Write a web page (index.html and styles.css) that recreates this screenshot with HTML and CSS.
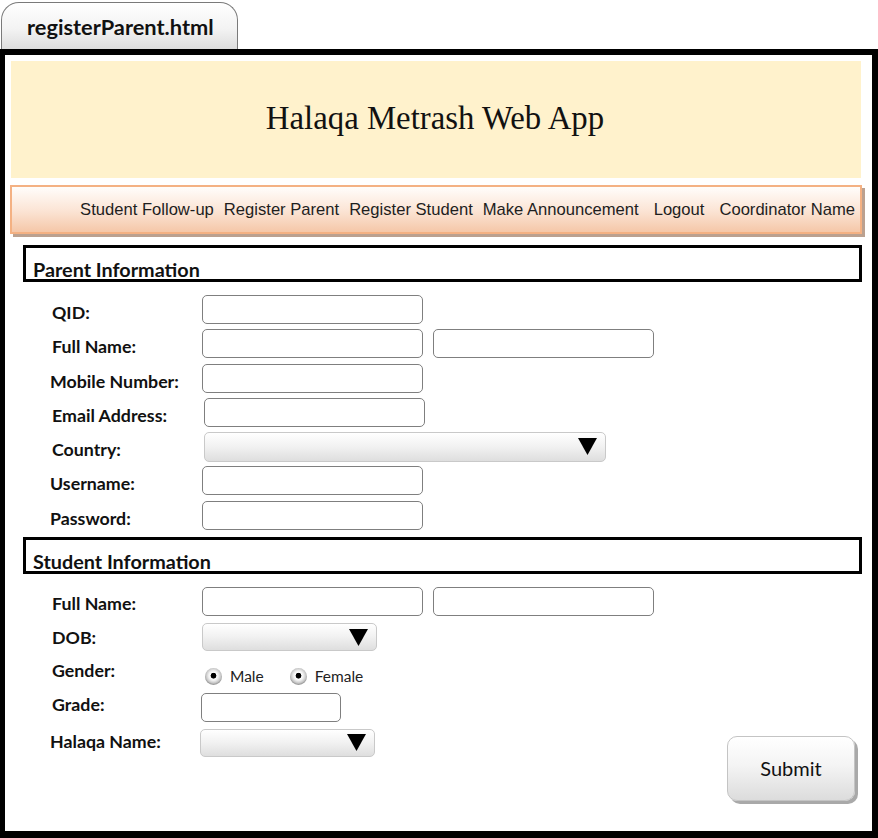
FILE: index.html
```html
<!DOCTYPE html>
<html lang="en">
<head>
<meta charset="utf-8">
<title>registerParent.html</title>
<link rel="stylesheet" href="styles.css">
</head>
<body>
<div class="tab">registerParent.html</div>
<div class="frame">
  <header class="banner"><h1 class="banner-title">Halaqa Metrash Web App</h1></header>
  <nav class="menu">
    <a class="menu-link">Student Follow-up</a>
    <a class="menu-link">Register Parent</a>
    <a class="menu-link">Register Student</a>
    <a class="menu-link">Make Announcement</a>
    <a class="menu-link menu-link-wide">Logout</a>
    <a class="menu-link menu-link-wide">Coordinator Name</a>
  </nav>

  <div class="section-title">Parent Information</div>
  <div class="form parent-form">
    <div class="row"><span class="label">QID:</span><span class="field"></span></div>
    <div class="row"><span class="label">Full Name:</span><span class="field"></span><span class="field field-second"></span></div>
    <div class="row"><span class="label label-left">Mobile Number:</span><span class="field"></span></div>
    <div class="row"><span class="label">Email Address:</span><span class="field field-shift"></span></div>
    <div class="row"><span class="label">Country:</span><span class="select select-wide field-shift"><svg class="caret" viewBox="0 0 19 17"><polygon points="0,0 19,0 9.5,17"/></svg></span></div>
    <div class="row"><span class="label label-left">Username:</span><span class="field"></span></div>
    <div class="row"><span class="label label-left">Password:</span><span class="field"></span></div>
  </div>

  <div class="section-title section-title-student">Student Information</div>
  <div class="student-area">
    <div class="form student-form">
      <div class="row"><span class="label label-low">Full Name:</span><span class="field"></span><span class="field field-second"></span></div>
      <div class="row row-select"><span class="label label-mid">DOB:</span><span class="select select-short"><svg class="caret" viewBox="0 0 19 17"><polygon points="0,0 19,0 9.5,17"/></svg></span></div>
      <div class="row row-gender"><span class="label label-top">Gender:</span>
        <span class="radios">
          <span class="radio-item"><span class="radio"></span>Male</span>
          <span class="radio-item"><span class="radio"></span>Female</span>
        </span>
      </div>
      <div class="row"><span class="label label-high">Grade:</span><span class="field field-grade"></span></div>
      <div class="row row-select"><span class="label label-left label-raised">Halaqa Name:</span><span class="select select-short select-halaqa"><svg class="caret" viewBox="0 0 19 17"><polygon points="0,0 19,0 9.5,17"/></svg></span></div>
    </div>
    <button class="submit" type="button">Submit</button>
  </div>
</div>
</body>
</html>
```

FILE: styles.css
```css
* { box-sizing: border-box; }

html, body {
  margin: 0;
  padding: 0;
  background: #ffffff;
}

body {
  width: 878px;
  height: 838px;
  overflow: hidden;
  font-family: "Lato", "Open Sans", sans-serif;
  color: #111;
}

.tab {
  margin: 2px 0 0 1px;
  width: 237px;
  height: 48px;
  border: 1.5px solid #7a7a7a;
  border-bottom: none;
  border-radius: 18px 18px 0 0;
  background: linear-gradient(#ffffff 0%, #f3f3f3 55%, #dcdcdc 100%);
  font-weight: 700;
  font-size: 21.8px;
  padding: 12px 0 0 25px;
  line-height: 24px;
  color: #111;
}

.frame {
  margin-top: -1px;
  width: 878px;
  height: 790px;
  border-style: solid;
  border-color: #000;
  border-width: 6px 6px 8px 5px;
  background: #fff;
  display: flex;
  flex-direction: column;
}

.banner {
  margin: 6px 0 0 6px;
  width: 850px;
  height: 117px;
  background: #fff2cc;
  display: flex;
  align-items: center;
  justify-content: center;
}

.banner-title {
  margin: 0 0 0 -2px;
  font-family: "Liberation Serif", "Times New Roman", serif;
  font-weight: 400;
  font-size: 32.8px;
  color: #111;
  padding-bottom: 2px;
}

.menu {
  margin: 7px 0 0 5px;
  width: 852px;
  height: 49px;
  border: 2px solid #f4b183;
  background: linear-gradient(#fffdfb 0%, #fbe3d3 55%, #f5c7a8 100%);
  box-shadow: 3px 3px 0 #bba190;
  display: flex;
  justify-content: flex-end;
  align-items: center;
  gap: 10px;
  padding: 0 5px 0 0;
  font-family: "Liberation Sans", Arial, sans-serif;
  font-size: 16.6px;
  color: #1e1e1e;
}

.menu-link-wide { margin-left: 5px; }

.section-title {
  margin: 11px 0 0 18px;
  width: 839px;
  height: 37px;
  border: 3px solid #000;
  font-weight: 700;
  font-size: 19.8px;
  line-height: 20px;
  padding: 11px 0 0 7px;
  color: #111;
}

.section-title-student { margin-top: 7px; }

.form {
  display: flex;
  flex-direction: column;
  padding-left: 46px;
}

.parent-form {
  margin-top: 13px;
  gap: 5.3px;
}

.row {
  display: flex;
  align-items: center;
  height: 29px;
}

.label {
  width: 151px;
  font-weight: 700;
  font-size: 17.8px;
  padding-top: 5px;
  padding-left: 1px;
  color: #111;
}

.label-left { margin-left: -2px; width: 153px; }

.field {
  display: block;
  width: 221px;
  height: 29px;
  border: 1.5px solid #7f7f7f;
  border-radius: 5px;
  background: #fff;
}

.field-second { margin-left: 10px; }
.field-shift { margin-left: 2px; }

.select {
  display: flex;
  align-items: center;
  justify-content: flex-end;
  height: 30px;
  border: 1.5px solid #c9c9c9;
  border-radius: 5px;
  background: linear-gradient(#ffffff 0%, #f1f1f1 50%, #dedede 100%);
  padding-right: 8px;
}

.select-wide { width: 402px; }
.select-short { width: 175px; height: 28px; }

.caret {
  width: 19px;
  height: 17px;
  fill: #000;
}

.student-area {
  display: flex;
  align-items: flex-start;
  justify-content: space-between;
  padding-right: 17px;
}

.student-form {
  margin-top: 13px;
  gap: 7.3px;
}

.row-select { height: 28px; }

.label-low { padding-top: 3px; }
.label-mid { padding-top: 0; }
.label-high { padding-top: 0; padding-bottom: 6px; }
.label-raised { padding-top: 0; padding-bottom: 4px; }

.row-gender { height: 27px; align-items: flex-start; }
.label-top { padding-top: 1px; }

.radios {
  display: flex;
  gap: 26px;
  margin-top: 9px;
  margin-left: 3px;
  font-size: 15.5px;
  color: #222;
}

.radio-item {
  display: flex;
  align-items: center;
  gap: 8px;
}

.radio {
  width: 17px;
  height: 17px;
  border-radius: 50%;
  background: radial-gradient(circle at 50% 45%, #000 0 2.6px, #ffffff 3.2px, #eeeeee 5px, #b5b5b5 8.5px);
  box-shadow: inset 0 -1px 1px rgba(0,0,0,0.15);
}

.field-grade { width: 140px; margin-left: -1px; }
.select-halaqa { margin-left: -2px; }

.submit {
  margin-top: 162px;
  width: 128px;
  height: 65px;
  border: 1.5px solid #c4c4c4;
  border-radius: 10px;
  background: linear-gradient(#ffffff 0%, #f4f4f4 45%, #dcdcdc 100%);
  box-shadow: 3px 3px 0 #a9a9a9;
  font-family: "Lato", "Open Sans", sans-serif;
  font-size: 20px;
  color: #111;
  padding: 0;
}
```
